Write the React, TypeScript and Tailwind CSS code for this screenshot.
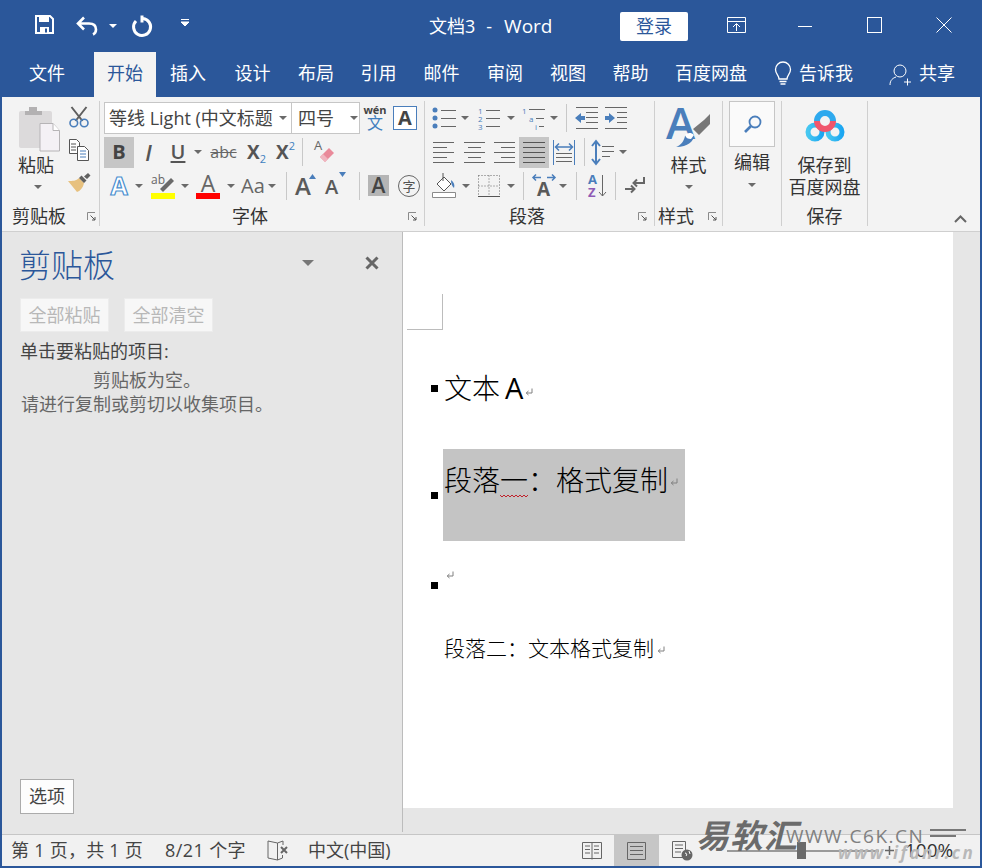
import React from 'react';

const BLUE = '#4a7ebb';
const GRAY = '#666666';

function Caret({ className = '', color = '#6a6a6a' }: { className?: string; color?: string }) {
  return (
    <svg width="8" height="4" viewBox="0 0 8 4" className={'shrink-0 ' + className}>
      <path d="M0 0h8L4 4z" fill={color} />
    </svg>
  );
}

function Sep({ className = '' }: { className?: string }) {
  return <div className={'w-px h-[28px] bg-[#c8c8c8] shrink-0 ' + className} />;
}

function Launcher({ className = '' }: { className?: string }) {
  return (
    <svg width="9" height="9" viewBox="0 0 9 9" className={'shrink-0 ' + className}>
      <path d="M.5 8V.5H8" fill="none" stroke="#8a8a8a" />
      <path d="M3.5 3.5L8 8M8 5v3H5" fill="none" stroke="#555" />
    </svg>
  );
}

function Ico({ w, h, className = '', children }: { w: number; h: number; className?: string; children: React.ReactNode }) {
  return (
    <svg width={w} height={h} viewBox={`0 0 ${w} ${h}`} className={'shrink-0 overflow-visible ' + className}>
      {children}
    </svg>
  );
}

// horizontal text lines, every line is [x1, x2, y]
function Lines({ w, h, rows, color = GRAY, className = '' }: { w: number; h: number; rows: number[][]; color?: string; className?: string }) {
  const d = rows.map((r) => `M${r[0]} ${r[2] + 0.5}H${r[1]}`).join('');
  return (
    <Ico w={w} h={h} className={className}>
      <path d={d} stroke={color} fill="none" />
    </Ico>
  );
}

function Pilcrow({ className = '' }: { className?: string }) {
  return (
    <Ico w={8} h={8} className={className}>
      <path d="M7 .5v4.5H1.5M3.5 3L1.2 5l2.3 2" fill="none" stroke="#808080" />
    </Ico>
  );
}

const tabs = [
  { t: '插入', c: 'w-[64px]' },
  { t: '设计', c: 'w-[65px]' },
  { t: '布局', c: 'w-[62px]' },
  { t: '引用', c: 'w-[63px]' },
  { t: '邮件', c: 'w-[63px]' },
  { t: '审阅', c: 'w-[64px]' },
  { t: '视图', c: 'w-[62px]' },
  { t: '帮助', c: 'w-[63px]' },
];

function TitleBar() {
  return (
    <div className="h-[52px] flex items-center text-white relative">
      <Ico w={19} h={19} className="ml-[33px] mt-[-3px]">
        <path d="M1 1h14l3 3v14H1z" fill="none" stroke="#fff" strokeWidth="2" />
        <path d="M4 1h10v6H4zM5 12h9v6H5z" fill="#fff" />
        <path d="M10 13.5h2v4h-2z" fill="#2b579a" />
      </Ico>
      <Ico w={23} h={20} className="ml-[22px] mt-[-1px]">
        <path d="M8 1.5L2 7.5l6 6M2.500 7.500H13c4 0 7 2 7 6 0 2-1 4-3 5" fill="none" stroke="#fff" strokeWidth="2.600" />
      </Ico>
      <Caret color="#fff" className="ml-[10px]" />
      <Ico w={21} h={22} className="ml-[14px]">
        <path d="M12 3.500a8.500 8.500 0 1 1-7 2.500" fill="none" stroke="#fff" strokeWidth="3" />
        <path d="M11 .5v7" stroke="#fff" strokeWidth="3" />
      </Ico>
      <Ico w={8} h={8} className="ml-[29px] mt-[-6px]">
        <path d="M0 .5h8M0 3h8L4 7z" stroke="#fff" fill="#fff" strokeWidth="1" />
      </Ico>
      <div className="ml-[240px] w-[122px] text-[18px] leading-[24px] flex whitespace-nowrap">
        <span className="shrink-0">文档3</span>
        <span className="shrink-0 ml-[11px]">-</span>
        <span className="shrink-0 ml-[12px] text-[19px]">Word</span>
      </div>
      <div className="ml-[69px] w-[68px] h-[29px] mt-[1px] bg-white rounded-[2px] text-[#2b579a] text-[18px] flex items-center justify-center">登录</div>
      <Ico w={19} h={16} className="ml-[39px] mt-[-3px]">
        <path d="M.5.5h18v15H.5zM.5 4.500h18M9.500 14V7M6 10l3.500-3.500L13 10" fill="none" stroke="#fff" />
      </Ico>
      <div className="ml-[52px] w-[14px] h-px bg-white" />
      <div className="ml-[55px] mt-[-3px] w-[15px] h-[16px] border border-white" />
      <Ico w={16} h={16} className="ml-[54px] mt-[-3px]">
        <path d="M.5.5l15 15M15.5.5l-15 15" stroke="#fff" fill="none" />
      </Ico>
    </div>
  );
}

function TabBar() {
  return (
    <div className="h-[45px] pb-[2px] flex items-center text-white text-[18px]">
      <div className="w-[92px] pl-[27px]">文件</div>
      <div className="w-[62px] h-[45px] self-start pb-[2px] bg-[#f3f3f3] text-[#2b579a] flex items-center justify-center">开始</div>
      {tabs.map((x) => (
        <div key={x.t} className={'text-center ' + x.c}>{x.t}</div>
      ))}
      <div className="w-[72px] ml-[13px]">百度网盘</div>
      <Ico w={18} h={25} className="ml-[27px]">
        <path d="M5 18c0-4-3.500-5-3.500-9.500a7.500 7.500 0 0 1 15 0C16.500 13 13 14 13 18z" fill="none" stroke="#fff" strokeWidth="1.300" />
        <path d="M5.500 20.500h7M6.500 23h5" stroke="#fff" strokeWidth="1.500" />
      </Ico>
      <div className="ml-[7px]">告诉我</div>
      <Ico w={22} h={22} className="ml-[36px] mt-[2px]">
        <circle cx="11" cy="7" r="6" fill="none" stroke="#fff" />
        <path d="M1 21c0-5 3-7 6-8M15 18h7M18.500 14.500v7" stroke="#fff" fill="none" />
      </Ico>
      <div className="ml-[8px]">共享</div>
    </div>
  );
}

function ClipboardGroup() {
  return (
    <div className="w-[98px] h-[125px] shrink-0 border-r border-[#cfcfcf] flex flex-col">
      <div className="h-[105px] flex">
        <div className="w-[66px] pl-[2px] flex flex-col items-center">
          <Ico w={42} h={45} className="mt-[6px] ml-[8px]">
            <rect x="0" y="4" width="33" height="37" rx="2" fill="#dcdadb" />
            <path d="M6 8V4h4V0h8v4h5v4z" fill="#b3b1b2" />
            <path d="M21 16.500h13l6.500 7V44H21z" fill="#f4f1f5" stroke="#b6b4b6" />
            <path d="M34 16.500v7h6.500" fill="#fff" stroke="#b6b4b6" />
          </Ico>
          <div className="text-[18px] leading-[22px] text-[#333] mt-[2px]">粘贴</div>
          <Caret className="mt-[9px] ml-[4px]" />
        </div>
        <div className="w-[24px] pr-[2px] flex flex-col items-center">
          <Ico w={20} h={22} className="mt-[5px]">
            <path d="M2.500 1l11 14M17.500 1l-11 14" stroke="#5f5f5f" strokeWidth="2" />
            <circle cx="4.800" cy="17" r="3.800" fill="none" stroke={BLUE} strokeWidth="1.600" />
            <circle cx="15.200" cy="17" r="3.800" fill="none" stroke={BLUE} strokeWidth="1.600" />
          </Ico>
          <Ico w={20} h={22} className="mt-[11px]">
            <path d="M.5.5h7l3 3v11H.5z" fill="#fff" stroke="#555" />
            <path d="M8.500 7.500h7l4 4v10h-11z" fill="#fff" stroke="#555" />
            <path d="M2 5h5M2 8h5M2 11h5" stroke="#555" />
            <path d="M11 12h6M11 15h6M11 18h6" stroke={BLUE} />
          </Ico>
          <Ico w={23} h={21} className="mt-[11px]">
            <path d="M0 9l9 11c3-1 6-4 7-9l-5-5C8 9 5 9 0 9z" fill="#e7c17f" />
            <path d="M11 6l5 5 2.500-2.500-5-5zM16 4.500L20 1l2.500 2.500L19 7z" fill="#606060" />
          </Ico>
        </div>
      </div>
      <div className="h-[20px] flex items-center pl-[10px]">
        <span className="text-[18px] leading-[20px] text-[#333] w-[75px]">剪贴板</span>
        <Launcher />
      </div>
    </div>
  );
}

function FontGroup() {
  return (
    <div className="w-[325px] h-[125px] shrink-0 border-r border-[#cfcfcf] flex flex-col">
      <div className="h-[105px] flex flex-col pl-[4px] pt-[1px] gap-[2px]">
        <div className="h-[32px] flex items-center">
          <div className="w-[188px] h-[32px] border border-[#c6c6c6] bg-white flex items-center pl-[4px] pr-[4px] text-[18px] text-[#444]">
            <span className="w-[170px] overflow-hidden whitespace-nowrap">等线 Light (中文标题</span>
            <Caret />
          </div>
          <div className="w-[68px] h-[32px] border border-l-0 border-[#c6c6c6] bg-white flex items-center pl-[6px] text-[18px] text-[#444]">
            <span className="w-[52px]">四号</span>
            <Caret />
          </div>
          <div className="ml-[5px] w-[20px] flex flex-col items-center text-[#3f7fbf]">
            <span className="text-[11px] leading-[11px] font-bold text-[#444]">wén</span>
            <span className="text-[16px] leading-[17px]">文</span>
          </div>
          <div className="ml-[8px] w-[24px] h-[24px] border border-[#4a7ebb] bg-white flex items-center justify-center text-[20px] font-bold text-[#444]">A</div>
        </div>
        <div className="h-[32px] flex items-center text-[#555]">
          <div className="w-[30px] h-[31px] bg-[#c6c6c6] flex items-center justify-center text-[20px] font-bold text-[#444]">B</div>
          <div className="w-[29px] text-center text-[22px] leading-[28px] italic font-semibold">I</div>
          <div className="w-[30px] text-center text-[20px] leading-[28px] font-semibold underline underline-offset-2">U</div>
          <Caret className="ml-[1px]" />
          <div className="w-[39px] ml-[2px] text-center text-[16px] leading-[24px] line-through text-[#666]">abc</div>
          <div className="w-[27px] h-[28px] flex justify-center items-center">
            <span className="text-[19px] leading-[24px] font-bold">X</span>
            <span className="text-[11px] leading-[12px] text-[#3f7fbf] mt-[14px]">2</span>
          </div>
          <div className="w-[31px] h-[28px] flex justify-center items-center">
            <span className="text-[19px] leading-[24px] font-bold">X</span>
            <span className="text-[11px] leading-[12px] text-[#3f7fbf] mt-[-12px]">2</span>
          </div>
          <Sep className="ml-[1px]" />
          <Ico w={20} h={24} className="ml-[11px]">
            <text x="0" y="10" fontSize="13" fill="#666" fontFamily="Open Sans">A</text>
            <path d="M6 17L15 8l5 5-9 9z" fill="#e98a9a" />
            <path d="M6 17l3-3 5 5-3 3z" fill="#f0b5bf" />
          </Ico>
        </div>
        <div className="h-[31px] flex items-center text-[#5a5a5a]">
          <Ico w={20} h={24} className="ml-[5px]">
            <text x="10" y="21" textAnchor="middle" fontSize="25" fontWeight="700" fill="#fff" stroke="#4a8fd0" strokeWidth="1.200" fontFamily="Open Sans">A</text>
          </Ico>
          <Caret className="ml-[6px]" />
          <Ico w={24} h={26} className="ml-[8px]">
            <text x="0" y="11" fontSize="12" fill="#666" fontFamily="Open Sans">ab</text>
            <path d="M9 16l11-11 3 3-11 11z" fill="#6a6a6a" />
            <path d="M0 20h24v6H0z" fill="#ffff00" />
          </Ico>
          <Caret className="ml-[6px]" />
          <div className="ml-[7px] w-[24px] h-[26px] flex flex-col items-center">
            <span className="text-[23px] leading-[20px] text-[#666]">A</span>
            <span className="w-[24px] h-[6px] bg-[#ff0000] block" />
          </div>
          <Caret className="ml-[7px]" />
          <span className="ml-[6px] text-[20px] leading-[26px] w-[27px] text-[#666]">Aa</span>
          <Caret />
          <Sep className="ml-[10px]" />
          <div className="ml-[8px] w-[22px] flex items-start">
            <span className="text-[24px] leading-[26px] font-semibold">A</span>
            <Ico w={7} h={5} className="ml-[-2px] mt-[1px]"><path d="M0 5h7L3.500 0z" fill={BLUE} /></Ico>
          </div>
          <div className="ml-[8px] w-[24px] flex items-start">
            <span className="text-[20px] leading-[26px] font-semibold mt-[3px]">A</span>
            <Ico w={7} h={5} className="ml-[1px] mt-[1px]"><path d="M0 0h7L3.500 5z" fill={BLUE} /></Ico>
          </div>
          <Sep className="ml-[10px]" />
          <div className="ml-[8px] w-[21px] h-[21px] bg-[#b5b5b5] flex items-center justify-center text-[21px] leading-[21px] font-semibold text-[#444]">A</div>
          <div className="ml-[9px] w-[22px] h-[22px] rounded-full border border-[#666] flex items-center justify-center text-[13px] leading-[16px] text-[#555]">字</div>
        </div>
      </div>
      <div className="h-[20px] flex items-center pl-[132px]">
        <span className="text-[18px] leading-[20px] text-[#333] w-[176px]">字体</span>
        <Launcher />
      </div>
    </div>
  );
}

const L = (a: number[]) => a;

function ParagraphGroup() {
  return (
    <div className="w-[230px] h-[125px] shrink-0 border-r border-[#cfcfcf] flex flex-col">
      <div className="h-[105px] flex flex-col pl-[7px] pt-[1px] gap-[2px]">
        <div className="h-[32px] flex items-center">
          <Ico w={24} h={24}>
            <circle cx="3" cy="4" r="2.500" fill={BLUE} /><circle cx="3" cy="12" r="2.500" fill={BLUE} /><circle cx="3" cy="20" r="2.500" fill={BLUE} />
            <path d="M9 4.500h15M9 12.500h15M9 20.500h15" stroke={GRAY} />
          </Ico>
          <Caret className="ml-[5px]" />
          <Ico w={22} h={25} className="ml-[9px]">
            <text x="0" y="8" fontSize="8" fill={BLUE} fontFamily="Open Sans">1</text>
            <text x="0" y="16" fontSize="8" fill={BLUE} fontFamily="Open Sans">2</text>
            <text x="0" y="24" fontSize="8" fill={BLUE} fontFamily="Open Sans">3</text>
            <path d="M8 4.500h14M8 12.500h14M8 20.500h14" stroke={GRAY} />
          </Ico>
          <Caret className="ml-[7px]" />
          <Ico w={23} h={25} className="ml-[7px]">
            <text x="0" y="8" fontSize="8" fill={BLUE} fontFamily="Open Sans">1</text>
            <text x="7" y="16" fontSize="8" fill={BLUE} fontFamily="Open Sans">a</text>
            <text x="13" y="24" fontSize="8" fill={BLUE} fontFamily="Open Sans">i</text>
            <path d="M7 3.500h16M14 12.500h8M17 20.500h5" stroke={GRAY} />
          </Ico>
          <Caret className="ml-[5px]" />
          <Sep className="ml-[8px]" />
          <Ico w={23} h={24} className="ml-[8px]">
            <path d="M0 12l6-5v3h4v4H6v3z" fill={BLUE} />
            <path d="M1 1.500h22M11 6.500h12M11 11.500h12M11 16.500h12M1 22.500h22" stroke={GRAY} />
          </Ico>
          <Ico w={23} h={24} className="ml-[7px]">
            <path d="M10 12L4 7v3H0v4h4v3z" fill={BLUE} />
            <path d="M0 1.500h22M12 6.500h10M12 11.500h10M12 16.500h10M0 22.500h22" stroke={GRAY} />
          </Ico>
        </div>
        <div className="h-[32px] flex items-center">
          <Lines w={22} h={24} className="ml-[1px]" rows={[L([0, 21, 2]), L([0, 14, 7]), L([0, 21, 12]), L([0, 14, 17]), L([0, 21, 22])]} />
          <Lines w={22} h={24} className="ml-[9px]" rows={[L([0, 21, 2]), L([4, 17, 7]), L([0, 21, 12]), L([4, 17, 17]), L([0, 21, 22])]} />
          <Lines w={22} h={24} className="ml-[8px]" rows={[L([0, 21, 2]), L([7, 21, 7]), L([0, 21, 12]), L([7, 21, 17]), L([0, 21, 22])]} />
          <div className="ml-[3px] w-[30px] h-[31px] bg-[#c6c6c6] flex items-center justify-center">
            <Lines w={22} h={24} rows={[L([0, 22, 2]), L([0, 22, 7]), L([0, 22, 12]), L([0, 22, 17]), L([0, 22, 22])]} color="#555" />
          </div>
          <Ico w={22} h={25} className="ml-[4px]">
            <path d="M.5 0v25M21.500 0v25" stroke={BLUE} />
            <path d="M3 7h16M6 3.500L2.500 7 6 10.500M16 3.500L19.500 7 16 10.500" stroke={BLUE} strokeWidth="1.500" fill="none" />
            <path d="M3 13.500h16M3 17.500h16M3 21.500h16" stroke={GRAY} />
          </Ico>
          <Sep className="ml-[9px]" />
          <Ico w={22} h={25} className="ml-[7px]">
            <path d="M4 2v21M0 6l4-5 4 5M0 19l4 5 4-5" stroke={BLUE} strokeWidth="2" fill="none" />
            <path d="M10 6.500h12M10 11.500h12M10 16.500h8" stroke={GRAY} />
          </Ico>
          <Caret className="ml-[5px]" />
        </div>
        <div className="h-[31px] flex items-center">
          <Ico w={24} h={25}>
            <path d="M.5 19.500h23v5H.5z" fill="#fff" stroke="#8a8a8a" />
            <path d="M5 11l7-7 7 7-7 7z" fill="#fff" stroke="#555" />
            <path d="M11 0v8" stroke="#555" />
            <path d="M19 7c3 2 4 5 3 8-2-2-3-4-3-8z" fill={BLUE} />
          </Ico>
          <Caret className="ml-[6px]" />
          <Ico w={22} h={22} className="ml-[8px]">
            <path d="M.5.5h21M.5 11h21M11 .5v21M.5.5v21M21.500.5v21" stroke="#666" strokeDasharray="1 2" fill="none" />
            <path d="M0 21.500h22" stroke="#555" />
          </Ico>
          <Caret className="ml-[7px]" />
          <Sep className="ml-[8px]" />
          <Ico w={23} h={23} className="ml-[8px]">
            <path d="M1 3.500h8M15 3.500h8M4 .5L1 3.500l3 3M20 .5l3 3-3 3" stroke={BLUE} strokeWidth="1.500" fill="none" />
            <text x="11.500" y="22" textAnchor="middle" fontSize="19" fontWeight="700" fill="#5a5a5a" fontFamily="Open Sans">A</text>
          </Ico>
          <Caret className="ml-[4px]" />
          <Sep className="ml-[9px]" />
          <Ico w={19} h={25} className="ml-[11px]">
            <text x="0" y="11" fontSize="13" fontWeight="700" fill={BLUE} fontFamily="Open Sans">A</text>
            <text x="0" y="24" fontSize="13" fontWeight="700" fill="#8e5bb5" fontFamily="Open Sans">Z</text>
            <path d="M14.500 2v21M11 19l3.500 4 3.500-4" stroke={GRAY} fill="none" />
          </Ico>
          <Sep className="ml-[8px]" />
          <Ico w={20} h={20} className="ml-[9px]">
            <path d="M19 1v6H9M12 3.500L8.500 7l3.500 3.500" stroke="#666" strokeWidth="2" fill="none" />
            <path d="M0 13h9M6 9.500L9.500 13 6 16.500" stroke="#666" strokeWidth="2" fill="none" />
          </Ico>
        </div>
      </div>
      <div className="h-[20px] flex items-center pl-[84px]">
        <span className="text-[18px] leading-[20px] text-[#333] w-[129px]">段落</span>
        <Launcher />
      </div>
    </div>
  );
}

function StylesGroup() {
  return (
    <div className="w-[68px] h-[125px] shrink-0 border-r border-[#cfcfcf] flex flex-col">
      <div className="h-[105px] flex flex-col items-center">
        <Ico w={46} h={42} className="mt-[6px]">
          <text x="0" y="32" fontSize="44" fontWeight="600" fill="#4a7ebb" fontFamily="Open Sans">A</text>
          <path d="M38 13l6-6v10L33 28l-6-6z" fill="#777" />
          <path d="M19 29c2-3 7-4 9-1 0 6-6 12-18 12 5-2 8-6 9-11z" fill="#4a7ebb" />
          <path d="M19 28c2-2 6-3 9 0l-3 4c-3 0-5-1-6-4z" fill="#fff" />
        </Ico>
        <div className="text-[18px] leading-[22px] text-[#333] mt-[5px]">样式</div>
        <Caret className="mt-[9px]" />
      </div>
      <div className="h-[20px] flex items-center pl-[3px]">
        <span className="text-[18px] leading-[20px] text-[#333] w-[50px]">样式</span>
        <Launcher />
      </div>
    </div>
  );
}

function EditGroup() {
  return (
    <div className="w-[59px] h-[125px] shrink-0 border-r border-[#cfcfcf] flex flex-col items-center">
      <div className="w-[46px] h-[46px] border border-[#c6c6c6] bg-[#fafafa] flex items-center justify-center">
        <Ico w={19} h={19}>
          <circle cx="12" cy="7" r="5.500" fill="none" stroke={BLUE} strokeWidth="1.800" />
          <path d="M8 11l-6 6" stroke={BLUE} strokeWidth="2.600" />
        </Ico>
      </div>
      <div className="text-[18px] leading-[22px] text-[#333] mt-[4px]">编辑</div>
      <Caret className="mt-[10px]" />
    </div>
  );
}

function SaveGroup() {
  return (
    <div className="w-[86px] h-[125px] shrink-0 border-r border-[#cfcfcf] flex flex-col items-center">
      <Ico w={40} h={32} className="mt-[9px]">
        <defs>
          <linearGradient id="bd" x1="0" y1="0" x2="1" y2="0">
            <stop offset="0" stopColor="#46c7f0" />
            <stop offset="1" stopColor="#1ba6f2" />
          </linearGradient>
        </defs>
        <circle cx="10" cy="22" r="7" fill="none" stroke="url(#bd)" strokeWidth="5" />
        <circle cx="30" cy="22" r="7" fill="none" stroke="url(#bd)" strokeWidth="5" />
        <path d="M12 11a8 8 0 0 1 16 0" fill="none" stroke="#2ea9ee" strokeWidth="6" />
        <path d="M12 11a8 8 0 0 0 16 0" fill="none" stroke="#f0566c" strokeWidth="6" />
      </Ico>
      <div className="text-[18px] leading-[22px] text-[#333] mt-[12px]">保存到</div>
      <div className="text-[18px] leading-[22px] text-[#333]">百度网盘</div>
      <div className="text-[18px] leading-[20px] text-[#333] mt-[8px]">保存</div>
    </div>
  );
}

function Ribbon() {
  return (
    <div className="h-[135px] shrink-0 bg-[#f3f3f3] border-b border-[#cfcfcf] pt-[4px] flex">
      <ClipboardGroup />
      <FontGroup />
      <ParagraphGroup />
      <StylesGroup />
      <EditGroup />
      <SaveGroup />
      <div className="flex-1 h-[125px] flex items-end justify-end pr-[13px] pb-[3px]">
        <Ico w={13} h={8}>
          <path d="M1 7l5.500-5.500L12 7" fill="none" stroke="#666" strokeWidth="2" />
        </Ico>
      </div>
    </div>
  );
}

function ClipPane() {
  return (
    <div className="w-[401px] shrink-0 h-[600px] bg-[#e6e6e6] border-r border-[#bcbcbc] flex flex-col pl-[18px]">
      <div className="h-[66px] flex items-center">
        <span className="text-[32px] leading-[40px] text-[#2b579a] font-light w-[283px] ml-[-1px]">剪贴板</span>
        <Caret className="scale-x-150 scale-y-150 mt-[-4px] ml-[2px]" color="#777" />
        <Ico w={14} h={14} className="ml-[53px] mt-[-4px]">
          <path d="M1.500 1.500l11 11M12.500 1.500l-11 11" stroke="#666" strokeWidth="3" />
        </Ico>
      </div>
      <div className="flex gap-[15px]">
        <div className="w-[89px] h-[34px] bg-[#f7f7f7] border border-[#ececec] flex items-center justify-center text-[18px] text-[#b8b8b8]">全部粘贴</div>
        <div className="w-[89px] h-[34px] bg-[#f7f7f7] border border-[#ececec] flex items-center justify-center text-[18px] text-[#b8b8b8]">全部清空</div>
      </div>
      <div className="text-[18px] leading-[24px] text-[#444] mt-[7px] whitespace-pre">单击要粘贴的项目:</div>
      <div className="text-[18px] leading-[24px] text-[#666] mt-[5px] pl-[73px]">剪贴板为空。</div>
      <div className="text-[18px] leading-[24px] text-[#666] pl-[1px]">请进行复制或剪切以收集项目。</div>
      <div className="flex-1" />
      <div className="w-[54px] h-[35px] mb-[18px] border border-[#ababab] bg-[#fdfdfd] flex items-center justify-center text-[18px] text-[#444]">选项</div>
    </div>
  );
}

function Page() {
  return (
    <div className="w-[550px] h-[576px] bg-white flex flex-col text-black font-light">
      <div className="ml-[4px] mt-[62px] w-[36px] h-[36px] border-r border-b border-[#bcbcbc]" />
      <div className="mt-[38px] h-[40px] pl-[28px] flex items-center">
        <div className="w-[7px] h-[7px] bg-black" />
        <span className="ml-[6px] text-[28px] leading-[40px]">文本</span>
        <span className="ml-[5px] text-[29px] leading-[40px] font-normal">A</span>
        <Pilcrow className="ml-[2px] mt-[8px]" />
      </div>
      <div className="mt-[41px] h-[92px] pl-[28px] flex items-center">
        <div className="w-[7px] h-[7px] bg-black" />
        <div className="ml-[5px] w-[242px] h-[92px] bg-[#c4c4c4] pl-[1px] pt-[11px] flex items-start">
          <span className="text-[28px] leading-[40px] whitespace-pre relative">
            段落一：格式复制
            <svg width="29" height="4" viewBox="0 0 29 4" className="absolute left-[56px] top-[34px]">
              <path d="M0 1l2 2 2-2 2 2 2-2 2 2 2-2 2 2 2-2 2 2 2-2 2 2 2-2 2 2 2-2" fill="none" stroke="#c0202a" />
            </svg>
          </span>
          <Pilcrow className="ml-[2px] mt-[18px]" />
        </div>
      </div>
      <div className="mt-[24px] h-[40px] pl-[28px] flex items-center">
        <div className="w-[7px] h-[7px] bg-black" />
        <Pilcrow className="ml-[8px] mt-[-20px]" />
      </div>
      <div className="mt-[31px] h-[24px] pl-[41px] flex items-center">
        <span className="text-[21px] leading-[24px] whitespace-pre">段落二：文本格式复制</span>
        <Pilcrow className="ml-[3px] mt-[3px]" />
      </div>
    </div>
  );
}

function StatusBar() {
  return (
    <div className="h-[32px] shrink-0 bg-[#f1f1f1] border-t border-[#c6c6c6] flex items-center text-[18px] text-[#444]">
      <span className="ml-[9px] w-[132px] whitespace-pre tracking-[0.25px]">第 1 页，共 1 页</span>
      <span className="ml-[22px] w-[81px] whitespace-pre tracking-[0.4px]">8/21 个字</span>
      <Ico w={22} h={22} className="ml-[21px]">
        <path d="M10.500 3L1 1v17l9.500 2zM10.500 3L16 1v4M10.500 20l5-2v-3" fill="none" stroke="#666" />
        <path d="M14 7l6 6M20 7l-6 6" stroke="#666" strokeWidth="2" />
      </Ico>
      <span className="ml-[19px] w-[83px] whitespace-pre">中文(中国)</span>
      <Ico w={20} h={18} className="ml-[191px]">
        <path d="M.5.5h19v16H.5zM10 .5v17M3 4h5M3 7.500h5M3 11h5M12 4h5M12 7.500h5M12 11h5" fill="none" stroke="#666" />
      </Ico>
      <div className="ml-[12px] w-[45px] h-full bg-[#c6c6c6] flex items-center justify-center">
        <Ico w={19} h={18}>
          <path d="M.5.5h18v17H.5zM3 4.500h13M3 8.500h13M3 12.500h13" fill="none" stroke="#666" />
        </Ico>
      </div>
      <Ico w={21} h={20} className="ml-[13px]">
        <path d="M.5.5h13v16H.5zM3 4h8M3 7.500h8M3 11h6" fill="none" stroke="#666" />
        <circle cx="15" cy="14" r="5.500" fill="#666" />
        <path d="M13 12c2 0 2 2 1 3M17 10l1 3" stroke="#fff" fill="none" />
      </Ico>
      <div className="ml-[34px] w-[70px] h-[2px] bg-[#9a9a9a]" />
      <div className="w-[9px] h-[17px] bg-[#6a6a6a]" />
      <div className="w-[73px] h-[2px] bg-[#9a9a9a]" />
      <Ico w={9} h={9} className="ml-[6px]">
        <path d="M0 4.500h9M4.500 0v9" stroke="#666" strokeWidth="1.500" />
      </Ico>
      <span className="ml-[11px] text-[#333] text-[19px]">100%</span>
    </div>
  );
}

export default function App() {
  return (
    <div className="w-[982px] h-[868px] relative overflow-hidden bg-[#2b579a] px-[2px] pb-[2px] flex flex-col font-['Open_Sans','Noto_Sans_CJK_SC',sans-serif]">
      <TitleBar />
      <TabBar />
      <Ribbon />
      <div className="flex-1 flex bg-[#e6e6e6] min-h-0">
        <ClipPane />
        <Page />
      </div>
      <StatusBar />

      {/* site watermark over the status bar */}
      <div className="absolute left-[696px] top-[816px] text-[33px] leading-[40px] font-bold italic text-[#6b6b6b] tracking-[1px]">易软汇</div>
      <div className="absolute left-[786px] top-[824px] text-[19px] leading-[24px] text-[#808080] tracking-[1.500px]">WWW.C6K.CN</div>
      <div className="absolute left-[930px] top-[829px] w-[36px] h-[2px] bg-[#777]" />
      <div className="absolute left-[930px] top-[835px] w-[26px] h-[2px] bg-[#777]" />
      <div className="absolute left-[838px] top-[843px] text-[17px] leading-[20px] italic font-bold text-[#b8b8b8] tracking-[2.500px]">www.ifanr.cn</div>
    </div>
  );
}
